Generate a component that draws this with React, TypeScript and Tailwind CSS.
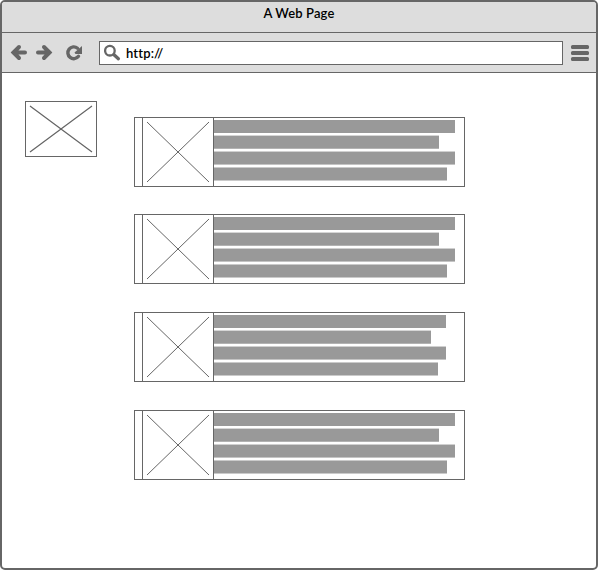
import React from 'react';

const rows = [
  { gap: '', bars: ['w-[241px]', 'w-[225px]', 'w-[241px]', 'w-[233px]'] },
  { gap: 'mt-[27px]', bars: ['w-[241px]', 'w-[225px]', 'w-[241px]', 'w-[233px]'] },
  { gap: 'mt-7', bars: ['w-[232px]', 'w-[217px]', 'w-[232px]', 'w-[224px]'] },
  { gap: 'mt-7', bars: ['w-[241px]', 'w-[225px]', 'w-[241px]', 'w-[233px]'] },
];

const barEdges = [
  'h-[13px]',
  'mt-[2px] h-[14px] border-t border-b border-t-[#d6d6d6] border-b-[#b3b3b3]',
  'mt-[2px] h-[14px] border-t border-b border-t-[#d0d0d0] border-b-[#c4c4c4]',
  'mt-[2px] h-[14px] border-t border-b border-t-[#cacaca] border-b-[#cacaca]',
];

function Card({ gap, bars }: { gap: string; bars: string[] }) {
  return (
    <article className={`flex h-[70px] w-[331px] border border-[#666] ${gap}`}>
      <div className="w-[7px] shrink-0" />
      <div className="h-[68px] w-[72px] shrink-0 border-x border-[#666]">
        <svg width="70" height="68" viewBox="0 0 70 68" className="block" stroke="#666" strokeWidth="1">
          <path d="M4 4 66 64M66 4 4 64" />
        </svg>
      </div>
      <div className="flex flex-col pt-[2px]">
        {bars.map((w, i) => (
          <div key={i} className={`bg-[#999] ${w} ${barEdges[i]}`} />
        ))}
      </div>
    </article>
  );
}

export default function App() {
  return (
    <div className="bg-white">
      <div className="flex h-[570px] w-[598px] flex-col overflow-hidden rounded-[5px] border-2 border-[#666] bg-white font-['Lato',sans-serif] text-black">
        <header className="flex h-[31px] shrink-0 justify-center border-b border-[#666] bg-[#ddd]">
          <h1 className="pt-[3px] text-[13px] leading-4 font-semibold tracking-[0.12px]">A Web Page</h1>
        </header>
        <nav className="flex h-10 shrink-0 items-start border-b border-[#666] bg-[#ddd] pl-2 pt-2">
          <svg width="76" height="24" viewBox="10 41 76 24" fill="none" stroke="#666" className="shrink-0">
            <g strokeWidth="4" strokeLinecap="round">
              <path d="M25 52.5H15M19 47l-5.500 5.500 5.500 5.500" />
              <path d="M38 52.5h10M44 47l5.500 5.500-5.500 5.500" />
            </g>
            <path d="M11 52.5 18 46v13zM52 52.5 45 46v13z" fill="#666" stroke="none" />
            <path d="M77.500 48.200A5.900 5.900 0 1 0 78.500 56.300" strokeWidth="3.400" strokeLinecap="round" />
            <path d="M82 46v8h-6.500l-1-1.500z" fill="#666" stroke="none" />
          </svg>
          <div className="ml-[13px] flex h-6 w-[464px] items-start border border-[#666] bg-white pl-1 pt-[2px]">
            <svg width="18" height="18" viewBox="104 44 18 18" fill="none" stroke="#666">
              <circle cx="109.900" cy="50.700" r="4.800" strokeWidth="2.300" />
              <path d="m114 54.700 4.400 4" strokeWidth="3.300" strokeLinecap="round" />
            </svg>
            <span className="ml-[4px] pt-px text-[13px] leading-4 font-semibold tracking-[0.15px]">http://</span>
          </div>
          <div className="ml-2 mt-1 flex flex-col gap-[2px]">
            <div className="h-1 w-[18px] rounded-[1.5px] bg-[#666]" />
            <div className="h-1 w-[18px] rounded-[1.5px] bg-[#666]" />
            <div className="h-1 w-[18px] rounded-[1.5px] bg-[#666]" />
          </div>
        </nav>
        <main className="flex items-start pl-[23px]">
          <div className="mt-7 h-14 w-[72px] border border-[#666]">
            <svg width="70" height="54" viewBox="0 0 70 54" className="block" stroke="#666" strokeWidth="1.25">
              <path d="M4 4 66 50M66 4 4 50" />
            </svg>
          </div>
          <section className="ml-[37px] mt-11 flex flex-col">
            {rows.map((row, i) => (
              <Card key={i} gap={row.gap} bars={row.bars} />
            ))}
          </section>
        </main>
      </div>
    </div>
  );
}
